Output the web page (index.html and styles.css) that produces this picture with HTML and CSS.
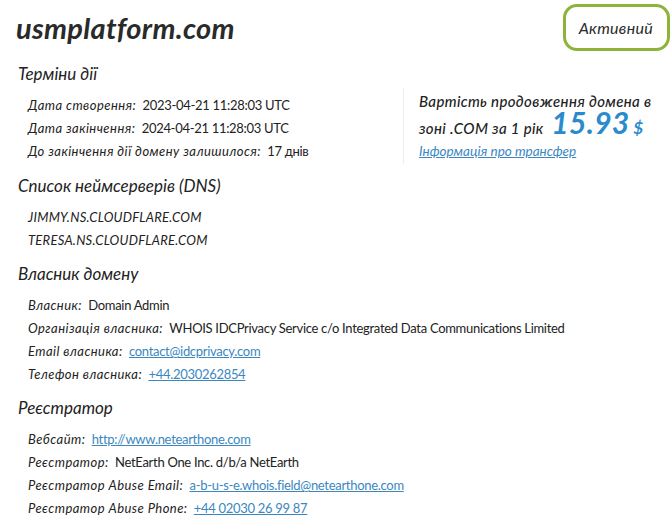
FILE: index.html
```html
<!DOCTYPE html>
<html lang="uk">

<head>
    <meta charset="UTF-8">
    <meta name="viewport" content="width=device-width, initial-scale=1.0">
    <title>usmplatform.com — WHOIS</title>
    <link rel="stylesheet" href="styles.css">
</head>

<body>
    <div class="whois">
        <!-- шапка -->
        <div class="head">
            <h1>usmplatform.com</h1>
            <span class="status">Активний</span>
        </div>

        <!-- терміни -->
        <div class="terms">
            <div class="terms-main">
                <h2>Терміни дії</h2>
                <ul class="rows">
                    <li><i>Дата створення:</i> <span>2023-04-21 11:28:03 UTC</span></li>
                    <li><i>Дата закінчення:</i> <span>2024-04-21 11:28:03 UTC</span></li>
                    <li><i>До закінчення дії домену залишилося:</i> <span>17 днів</span></li>
                </ul>
            </div>
            <div class="price">
                <p>Вартість продовження домена в</p>
                <p>зоні .COM за 1 рік <span class="sum">15.93</span> <span class="cur">$</span></p>
                <a href="#">Інформація про трансфер</a>
            </div>
        </div>

        <h2>Список неймсерверів (DNS)</h2>
        <ul class="rows ns">
            <li>JIMMY.NS.CLOUDFLARE.COM</li>
            <li>TERESA.NS.CLOUDFLARE.COM</li>
        </ul>

        <h2>Власник домену</h2>
        <ul class="rows">
            <li><i>Власник:</i> <span>Domain Admin</span></li>
            <li><i>Організація власника:</i> <span>WHOIS IDCPrivacy Service c/o Integrated Data Communications Limited</span></li>
            <li><i>Email власника:</i> <a href="#">contact@idcprivacy.com</a></li>
            <li><i>Телефон власника:</i> <a href="#">+44.2030262854</a></li>
        </ul>

        <h2>Реєстратор</h2>
        <ul class="rows">
            <li><i>Вебсайт:</i> <a href="#">http://www.netearthone.com</a></li>
            <li><i>Реєстратор:</i> <span>NetEarth One Inc. d/b/a NetEarth</span></li>
            <li><i>Реєстратор Abuse Email:</i> <a href="#">a-b-u-s-e.whois.field@netearthone.com</a></li>
            <li><i>Реєстратор Abuse Phone:</i> <a href="#">+44 02030 26 99 87</a></li>
        </ul>
    </div>
</body>

</html>
```

FILE: styles.css
```css
* {
    margin: 0;
    padding: 0;
}

body {
    background: #fff;
    color: #222;
    font-family: Lato, "Open Sans", sans-serif;
    font-size: 13px;
}

ul {
    list-style: none;
}

a {
    color: #3b87c0;
}

.whois {
    padding: 0 2px 0 16px;
}

.head {
    display: flex;
    justify-content: space-between;
    align-items: center;
    height: 49px;
    padding-top: 3px;
}

.head h1 {
    font-size: 29px;
    font-style: italic;
    font-weight: bold;
    color: #2a2a2a;
    letter-spacing: 0.3px;
}

.status {
    box-sizing: border-box;
    height: 47px;
    line-height: 41px;
    padding: 0 14px 0 13px;
    border: 3px solid #8db33a;
    border-radius: 14px;
    font-size: 16px;
    font-style: italic;
    color: #2a2a2a;
    letter-spacing: 0.3px;
}

h2 {
    font-size: 17px;
    font-style: italic;
    font-weight: normal;
    line-height: 24px;
    margin: 10px 0 8px 2px;
    color: #222;
}

.rows {
    padding-left: 12px;
}

.rows li {
    line-height: 23px;
    white-space: nowrap;
}

.rows i {
    margin-right: 3px;
    letter-spacing: 0.45px;
}

.rows span,
.rows a {
    letter-spacing: -0.3px;
}

.ns li {
    font-style: italic;
    letter-spacing: 0.25px;
}

.terms {
    display: flex;
}

.terms-main {
    width: 387px;
}

.price {
    width: 240px;
    margin-top: 36px;
    height: 76px;
    padding-left: 15px;
    border-left: 1px solid #eee;
}

.price p {
    font-size: 15px;
    font-style: italic;
    font-weight: 500;
    line-height: 26px;
    letter-spacing: 0.35px;
    color: #222;
    white-space: nowrap;
}

.price p + p {
    height: 29px;
    margin-top: -3px;
    line-height: 22px;
}

.price .sum {
    font-size: 30px;
    font-weight: bold;
    color: #2a8bcc;
    margin-left: 4px;
    letter-spacing: 0.3px;
}

.price .cur {
    font-size: 17px;
    font-weight: bold;
    color: #2a8bcc;
}

.price a {
    display: block;
    font-size: 13.5px;
    font-style: italic;
    line-height: 22px;
}
```
